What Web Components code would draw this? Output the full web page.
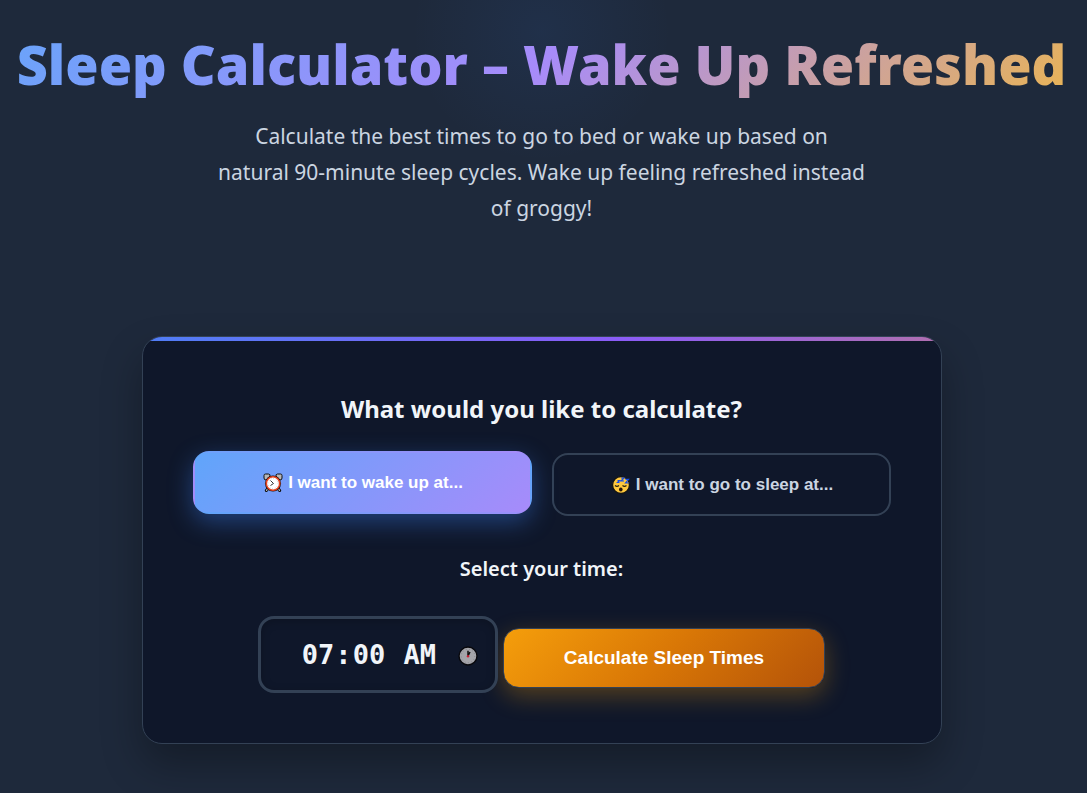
<!DOCTYPE html>
<html lang="en">
<head>
<meta charset="utf-8">
<meta name="viewport" content="width=device-width, initial-scale=1">
<title>Sleep Calculator</title>
<style>
body {
    background-color: #1e293b;
    color: #f1f5f9;
    font-family: "Noto Sans", "Open Sans", sans-serif;
    margin: 0;
    min-height: 100vh;
}
</style>
</head>
<body>
<sleep-page>
    <sleep-hero>
        <span slot="title">Sleep Calculator – Wake Up Refreshed</span>
        Calculate the best times to go to bed or wake up based on natural&nbsp;90-minute sleep cycles. Wake up feeling refreshed instead of groggy!
    </sleep-hero>
    <sleep-card>
        <span slot="title">What would you like to calculate?</span>
        <mode-button slot="modes" active>
            <icon-alarm slot="icon"></icon-alarm>
            I want to wake up at...
        </mode-button>
        <mode-button slot="modes">
            <icon-sleepy slot="icon"></icon-sleepy>
            I want to go to sleep at...
        </mode-button>
        <time-form value="07:00">
            <span slot="label">Select your time:</span>
            Calculate Sleep Times
        </time-form>
    </sleep-card>
</sleep-page>

<script>
function template(html) {
    const node = document.createElement('template');
    node.innerHTML = html;
    return node;
}

function define(name, node, setup) {
    customElements.define(name, class extends HTMLElement {
        constructor() {
            super();
            const shadowRoot = this.attachShadow({mode: 'open'});
            shadowRoot.appendChild(node.content.cloneNode(true));
        }

        connectedCallback() {
            if (setup) setup(this, this.shadowRoot);
        }
    });
}

// layout

define('sleep-page', template(`
<style>
:host {
    box-sizing: border-box;
    display: flex;
    flex-direction: column;
    gap: 110px;
    padding: 0 4px 49px 0;
}
</style>
<slot></slot>
`));

define('sleep-hero', template(`
<style>
:host {
    background: radial-gradient(circle 130px at 50% 32px, rgba(59, 130, 246, 0.08), transparent);
    display: block;
    padding-top: 28px;
    text-align: center;
}
h1 {
    background: linear-gradient(135deg, #68a4fa 0%, #a78bfa 50%, #ebb550 100%);
    background-clip: text;
    -webkit-background-clip: text;
    color: transparent;
    font-size: 54px;
    font-weight: 900;
    line-height: 72px;
    margin: 0 0 18px;
    white-space: nowrap;
}
p {
    color: #cbd5e1;
    font-size: 21px;
    line-height: 36px;
    margin: 0 auto;
    max-width: 660px;
}
</style>
<h1><slot name="title"></slot></h1>
<p><slot></slot></p>
`));

define('sleep-card', template(`
<style>
:host {
    background-color: #0f172a;
    border: 1px solid #334155;
    border-radius: 20px;
    box-shadow: 0 20px 40px rgba(0, 0, 0, 0.3);
    box-sizing: border-box;
    display: block;
    margin: 0 auto;
    max-width: 800px;
    overflow: hidden;
    padding: 50px;
    position: relative;
    width: 100%;
}
.accent {
    background: linear-gradient(90deg, #4f7df5, #8b5cf6 60%, #b06fb0);
    height: 4px;
    inset: 0 0 auto;
    position: absolute;
}
h2 {
    font-size: 24px;
    font-weight: 700;
    line-height: 44px;
    margin: 0 0 22px;
    text-align: center;
}
.modes {
    display: grid;
    gap: 20px;
    grid-template-columns: 1fr 1fr;
    margin-bottom: 36px;
}
</style>
<div class="accent"></div>
<h2><slot name="title"></slot></h2>
<div class="modes"><slot name="modes"></slot></div>
<slot></slot>
`));

// controls

define('mode-button', template(`
<style>
:host {
    display: block;
}
button {
    align-items: center;
    background-color: transparent;
    border: 2px solid #334155;
    border-radius: 16px;
    color: #cbd5e1;
    cursor: pointer;
    display: flex;
    font: 700 17px/22px "Liberation Sans", sans-serif;
    gap: 5px;
    justify-content: center;
    min-height: 63px;
    padding: 18px 22px 18px 24px;
    width: 100%;
}
:host([active]) button {
    background: linear-gradient(135deg, #60a5fa, #a78bfa);
    border-color: transparent;
    box-shadow: 0 8px 25px rgba(59, 130, 246, 0.4);
    color: #fff;
    transform: translateY(-2px);
}
</style>
<button type="button"><slot name="icon"></slot><span><slot></slot></span></button>
`), (host, root) => {
    root.querySelector('button').setAttribute('aria-pressed', host.hasAttribute('active'));
});

define('time-form', template(`
<style>
:host {
    display: block;
    text-align: center;
}
label {
    display: block;
    font-size: 20px;
    font-weight: 600;
    line-height: 34px;
    margin-bottom: 30px;
}
form {
    align-items: baseline;
    display: flex;
    flex-wrap: wrap;
    gap: 5px;
    justify-content: center;
}
.field {
    display: grid;
    position: relative;
}
input {
    background-color: #0f172a;
    border: 3px solid #334155;
    border-radius: 16px;
    box-shadow: inset 0 2px 10px rgba(0, 0, 0, 0.2);
    box-sizing: border-box;
    color: #f1f5f9;
    color-scheme: dark;
    font: 700 27px/36px "DejaVu Sans Mono", monospace;
    height: 77px;
    padding: 0 16px 0 40px;
    width: 240px;
}
input::-webkit-calendar-picker-indicator {
    opacity: 0;
}
icon-clock {
    pointer-events: none;
    position: absolute;
    right: 20px;
    top: 30px;
}
button {
    background: linear-gradient(135deg, #f59e0b, #d97706 50%, #b45309);
    border: 1px solid #334155;
    border-radius: 16px;
    box-shadow: 0 8px 25px rgba(245, 158, 11, 0.3);
    color: #fff;
    cursor: pointer;
    font: 700 19px/22px "Liberation Sans", sans-serif;
    padding: 18px 60px;
}
</style>
<label for="time"><slot name="label"></slot></label>
<form>
    <div class="field">
        <input id="time" type="time">
        <icon-clock></icon-clock>
    </div>
    <button type="button"><slot></slot></button>
</form>
`), (host, root) => {
    root.querySelector('input').value = host.getAttribute('value');
});

// icons

const iconStyle = `
<style>
:host {
    display: block;
    flex: none;
}
svg {
    display: block;
}
</style>
`;

define('icon-alarm', template(`${iconStyle}
<svg width="20" height="20" viewBox="0 0 20 20" aria-hidden="true">
    <path d="M5 15.500 3.300 17.500M15 15.500l1.700 2" stroke="#111" stroke-width="3" stroke-linecap="round"/>
    <path d="M5 15.500 3.500 17.300M15 15.500l1.500 1.800" stroke="#c8c8c8" stroke-width="1.200" stroke-linecap="round"/>
    <path d="M1 2.500Q1 1 2.500 1H5.500Q7.500 1.300 7 3L3 7Q1 7 1 5ZM19 2.500Q19 1 17.500 1H14.500q-2 .3-1.500 2L17 7q2 0 2-2Z" fill="#b8b8b8" stroke="#111"/>
    <circle cx="10" cy="10.500" r="8" fill="#111"/>
    <circle cx="10" cy="10.500" r="6.700" fill="#fff" stroke="#e8431f" stroke-width="1.600"/>
    <circle cx="10" cy="10.500" r="5" fill="none" stroke="#999" stroke-width=".7" stroke-dasharray=".6 2"/>
    <path d="m7.500 7.500 3 3-3 2" fill="none" stroke="#333"/>
</svg>
`));

define('icon-sleepy', template(`${iconStyle}
<svg width="20" height="20" viewBox="0 0 20 20" aria-hidden="true">
    <circle cx="10" cy="10" r="8.500" fill="#ffc83d" stroke="#151515" stroke-width="1.400"/>
    <path d="M4 10.500q2 1.600 4 0M11.500 10.500q2 1.600 4 0" fill="none" stroke="#26200f" stroke-width="1.200"/>
    <ellipse cx="9.800" cy="14.500" rx="1.800" ry="2" fill="#26150a"/>
    <path d="M6.500 5.500h2L6.500 7.500h2M10 3h3L10 6h3M14.500 4.300h3l-3 3.500h3" fill="none" stroke="#174de8" stroke-width="1.200"/>
</svg>
`));

define('icon-clock', template(`${iconStyle}
<svg width="20" height="20" viewBox="0 0 20 20" aria-hidden="true">
    <circle cx="10" cy="10" r="9" fill="#a4a4a9" stroke="#08080c" stroke-width="1.400"/>
    <circle cx="10" cy="10" r="6.800" fill="none" stroke="#77777d" stroke-width=".8" stroke-dasharray=".8 2.500"/>
    <path d="M10 10V4.800M10 10l2-4" stroke="#111" stroke-width="1.500"/>
    <circle cx="10" cy="10.300" r="1.200" fill="#c81e32"/>
</svg>
`));
</script>
</body>
</html>
